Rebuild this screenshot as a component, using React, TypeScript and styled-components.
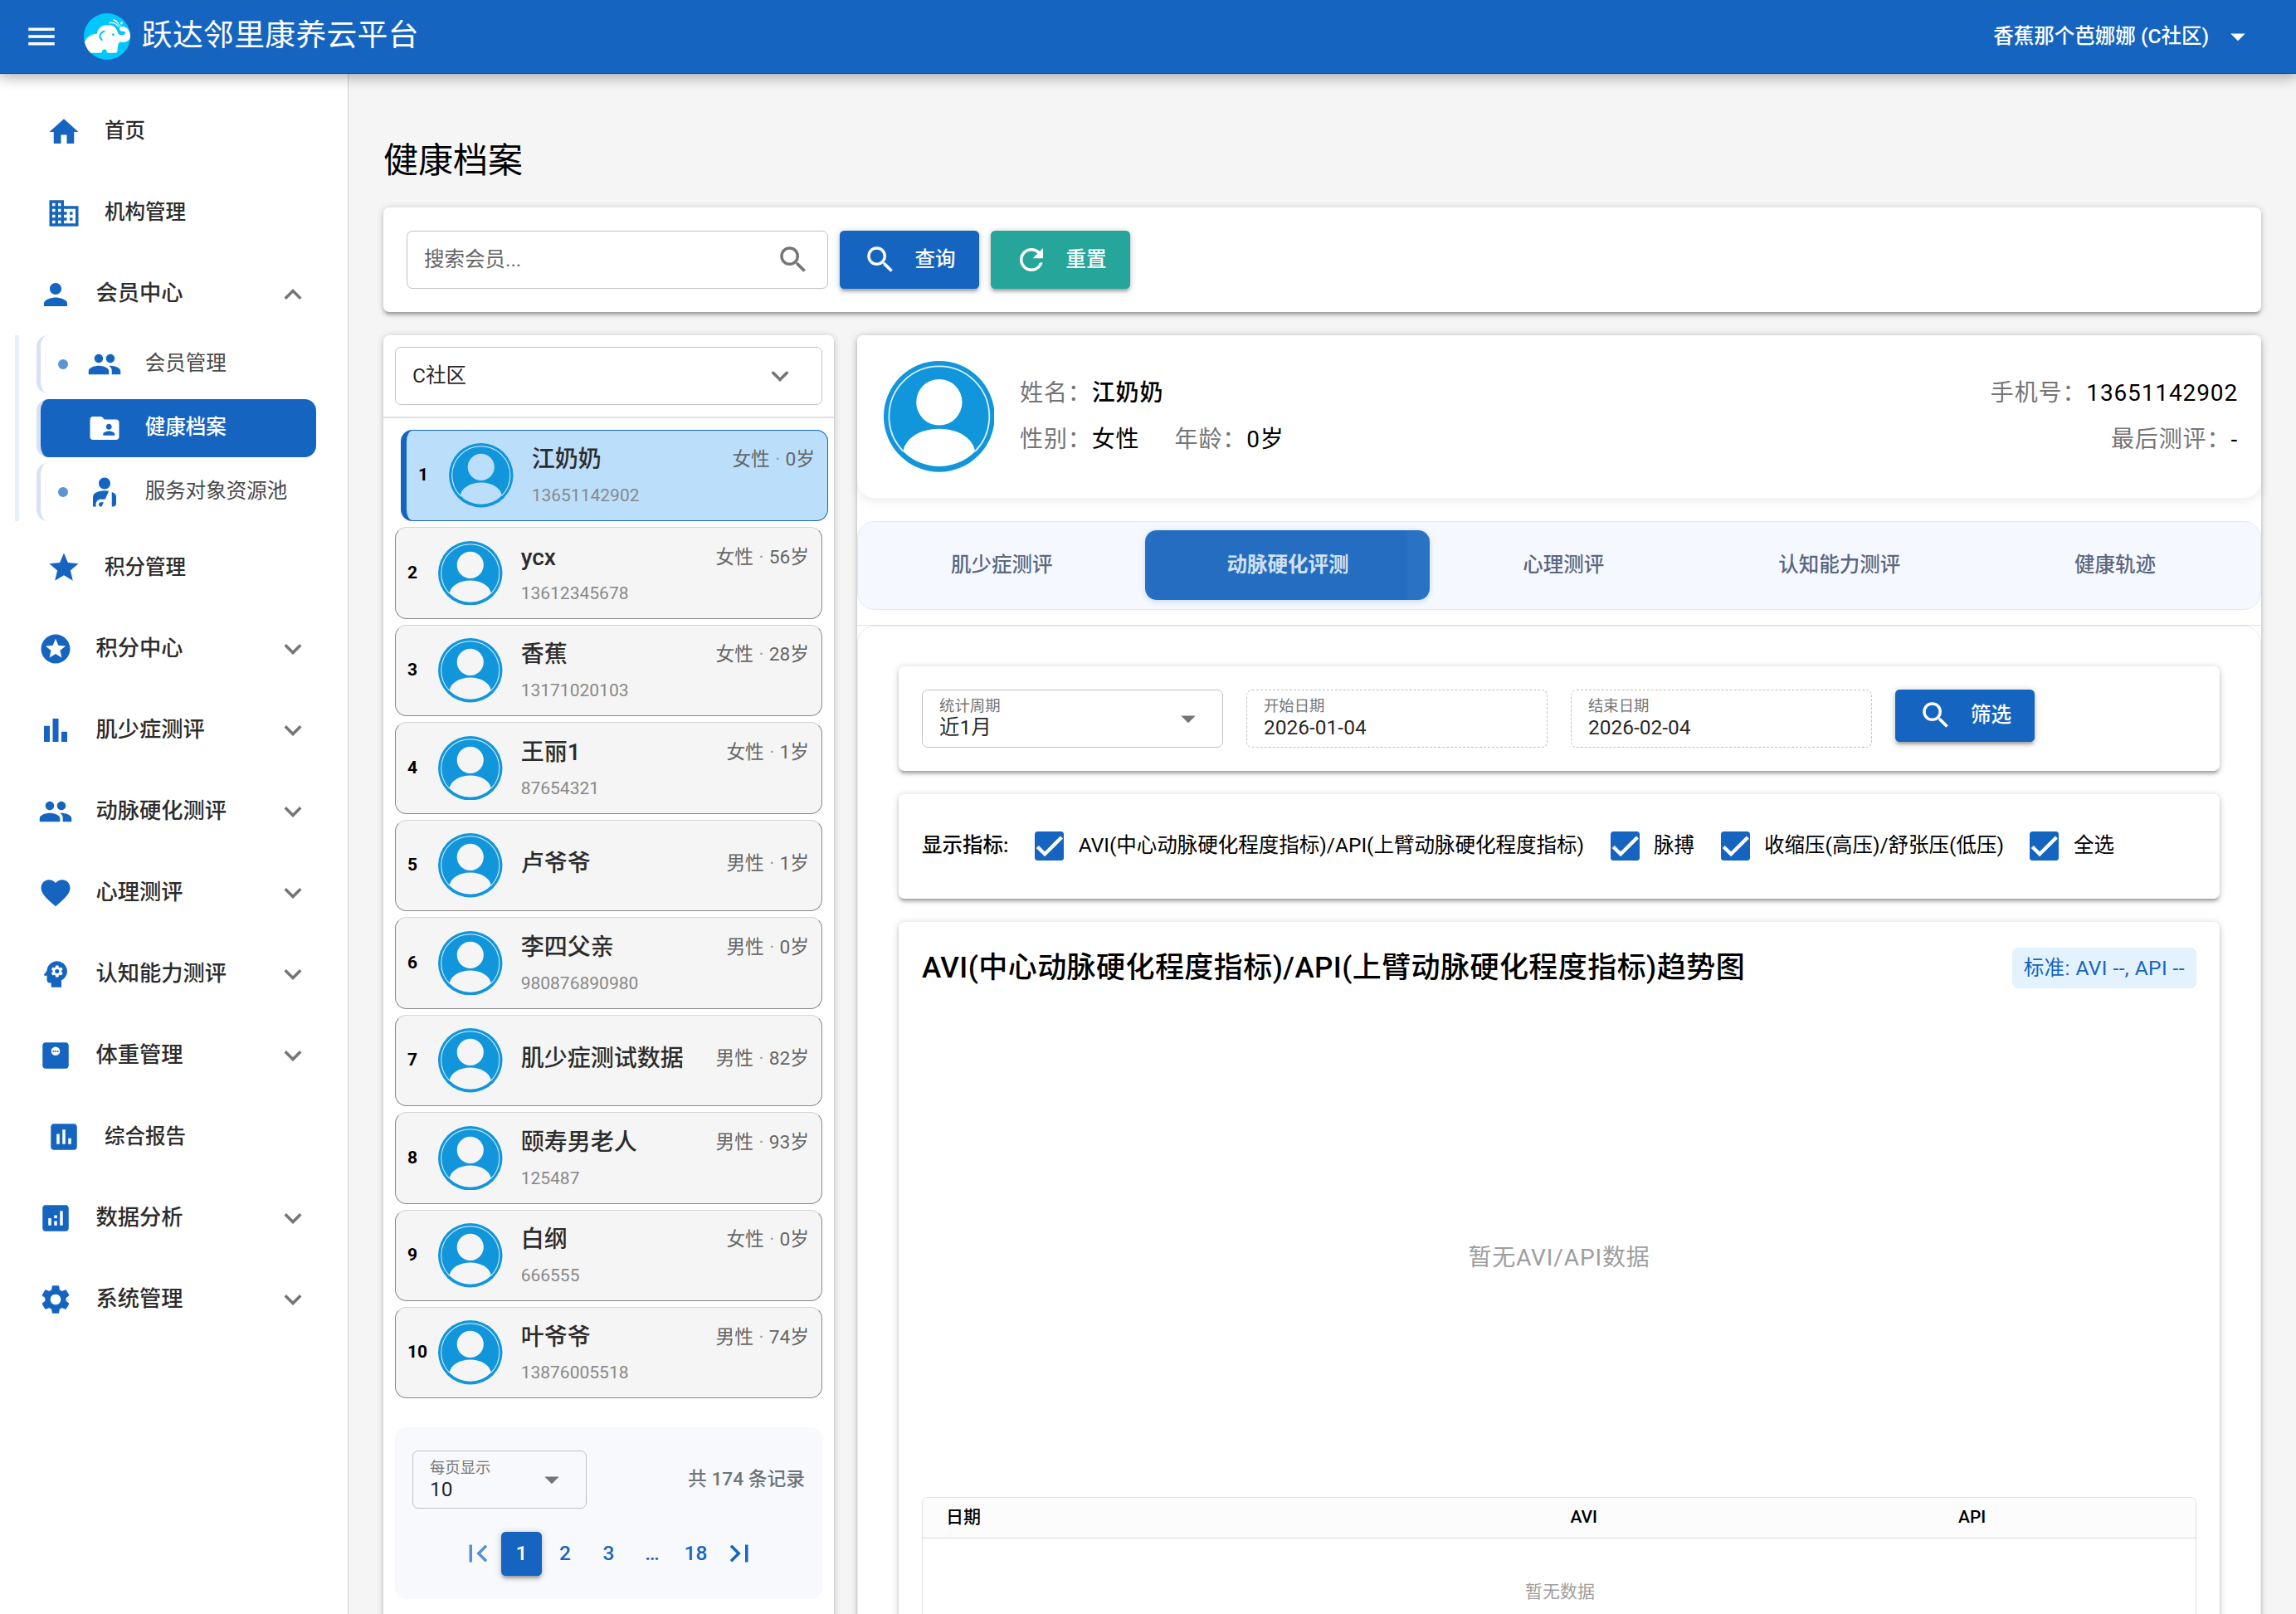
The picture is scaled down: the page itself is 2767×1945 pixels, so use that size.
import React from 'react';
import styled, { createGlobalStyle, css } from 'styled-components';
import type { IconType } from 'react-icons';
import {
  MdAnalytics,
  MdArrowDropDown,
  MdAssessment,
  MdBarChart,
  MdBusiness,
  MdExpandLess,
  MdExpandMore,
  MdFavorite,
  MdFirstPage,
  MdFolderShared,
  MdHome,
  MdLastPage,
  MdMenu,
  MdMonitorWeight,
  MdPeople,
  MdPerson,
  MdPersonalInjury,
  MdPsychology,
  MdRefresh,
  MdSearch,
  MdSettings,
  MdStar,
  MdStars,
} from 'react-icons/md';

const SCALE = 1.75;
const PRIMARY = '#1565c0';
const SECONDARY = '#26a69a';
const SHADOW =
  '0 1px 5px rgba(0,0,0,.2), 0 2px 2px rgba(0,0,0,.14), 0 3px 1px -2px rgba(0,0,0,.12)';

const GlobalStyle = createGlobalStyle`
  *, *::before, *::after { box-sizing: border-box; }
  html, body { margin: 0; overflow: hidden; background: #f5f5f5; }
  body { font-family: Roboto, "Noto Sans CJK SC", "Liberation Sans", sans-serif; }
  svg { display: block; flex: none; }
`;

const Page = styled.div`
  zoom: ${SCALE};
  height: calc(100vh / ${SCALE});
  display: flex;
  flex-direction: column;
  overflow: hidden;
  font-size: 14px;
  line-height: 1.5;
  color: #000;
`;

/* ---------- top bar ---------- */

const TopBar = styled.header`
  flex: none;
  position: relative;
  z-index: 2;
  display: flex;
  align-items: center;
  height: 50.6px;
  padding: 0 12px;
  color: #fff;
  background: ${PRIMARY};
  border-bottom: 1px solid rgba(0, 0, 0, 0.3);
  box-shadow: 0 0 10px 2px rgba(0, 0, 0, 0.2), 0 0 10px rgba(0, 0, 0, 0.24);
`;

const MenuButton = styled.div`
  width: 33.6px;
  display: flex;
  justify-content: center;
`;

const LogoBox = styled.div`
  margin: 0 8px 0 12px;
`;

const AppTitle = styled.div`
  flex: 1;
  font-size: 21px;
  letter-spacing: 0.01em;
  line-height: 1;
`;

const Account = styled.div`
  display: flex;
  align-items: center;
  gap: 8px;
  font-weight: 500;
  padding-right: 16px;
  line-height: 24px;
`;

/* ---------- drawer ---------- */

const Body = styled.div`
  flex: 1;
  min-height: 0;
  display: flex;
`;

const Drawer = styled.nav`
  flex: none;
  width: 240px;
  padding: 16px 12px 0 10px;
  background: #fff;
  border-right: 1px solid rgba(0, 0, 0, 0.18);
`;

const NavItem = styled.div<{ $group?: boolean }>`
  display: flex;
  align-items: center;
  height: 48px;
  margin-bottom: 8px;
  padding: 0 12px 0 ${(p) => (p.$group ? 16 : 22)}px;
  color: #2c2c2c;
  font-size: ${(p) => (p.$group ? 15 : 14)}px;
  font-weight: 500;

  > span {
    flex: 1;
    margin-left: 16px;
    padding-bottom: ${(p) => (p.$group ? 0.6 : 0)}px;
  }
  > svg:first-child { color: ${PRIMARY}; }
  > svg:last-child { color: #757575; margin-right: 2px; }
`;

const SubMenu = styled.div`
  display: flex;
  flex-direction: column;
  gap: 4px;
  margin: -3.7px 0 8px;
  padding-left: 12px;
  border-left: 3px solid #e8effc;
`;

const SubItem = styled.div<{ $active?: boolean }>`
  display: flex;
  align-items: center;
  height: 40px;
  width: 192.9px;
  border-left: 3px solid #d6e2f7;
  border-radius: 8px;
  color: #4a4a4a;
  font-size: 14px;

  > svg { color: ${PRIMARY}; margin-right: 16px; }
  > span { padding-bottom: 0.4px; }
  ${(p) =>
    p.$active &&
    css`
      background: ${PRIMARY};
      color: #fff;
      font-weight: 500;
      > svg { color: #fff; }
    `}
`;

const Dot = styled.i<{ $hidden?: boolean }>`
  width: 7px;
  height: 7px;
  margin: 0 13.1px 0 12px;
  border-radius: 50%;
  background: ${PRIMARY};
  opacity: ${(p) => (p.$hidden ? 0 : 0.7)};
`;

/* ---------- main area ---------- */

const Main = styled.main`
  flex: 1;
  min-width: 0;
  padding: 44.2px 24px 0;
  background: #f5f5f5;
`;

const PageTitle = styled.h5`
  margin: 0 0 16px;
  font-size: 24px;
  line-height: 32px;
  font-weight: 400;
`;

const Card = styled.section`
  background: #fff;
  border-radius: 4px;
  box-shadow: ${SHADOW};
`;

const SearchCard = styled(Card)`
  display: flex;
  gap: 8px;
  padding: 16px;
  margin-bottom: 16px;
`;

const Field = styled.div<{ $dashed?: boolean }>`
  display: flex;
  align-items: center;
  height: 40px;
  padding: 0 11.4px;
  border: 1px ${(p) => (p.$dashed ? 'dashed' : 'solid')} #c2c2c2;
  border-radius: 4px;
  color: rgba(0, 0, 0, 0.87);
  > span {
    flex: 1;
    padding-top: 0.6px;
  }
  > svg { color: #757575; }
`;

const SearchField = styled(Field)`
  width: 290px;
  color: #666;
`;

const CommunityField = styled(Field)`
  margin: 8px;
  > svg { margin-right: 5px; }
`;

const LabeledText = styled.div`
  flex: 1;
  display: flex;
  flex-direction: column;
  padding-bottom: 0.8px;
  > small {
    font-size: 10.5px;
    line-height: 14px;
    color: #757575;
  }
  > b {
    font-weight: 400;
    line-height: 16px;
  }
`;

const Button = styled.div<{ $color?: string; $height?: number }>`
  display: flex;
  align-items: center;
  gap: 12px;
  width: 96px;
  height: ${(p) => p.$height ?? 40}px;
  padding: 0 16px;
  border-radius: 3px;
  color: #fff;
  font-weight: 500;
  background: ${(p) => p.$color ?? PRIMARY};
  box-shadow: ${SHADOW};
`;

const Columns = styled.div`
  display: flex;
  gap: 16px;
  min-height: 940px;
`;

const ListCard = styled(Card)`
  flex: none;
  width: 24%;
`;

const ListDivider = styled.hr`
  height: 1.2px;
  margin: 0;
  border: 0;
  background: #e0e0e0;
`;

const MemberList = styled.div`
  display: flex;
  flex-direction: column;
  gap: 4px;
  padding: 7.8px 8px 20px;
`;

const MemberRow = styled.div<{ $active?: boolean }>`
  display: flex;
  align-items: center;
  height: 63.14px;
  padding: 0 8px;
  border: 1px solid #8c8686;
  border-top-color: #d4d4d4;
  border-radius: 8px;
  background: #f5f5f5;
  ${(p) =>
    p.$active &&
    css`
      border-color: ${PRIMARY};
      border-left-width: 4px;
      background: #bbdefb;
      transform: translateX(4px);
    `}
`;

const RowNumber = styled.div`
  flex: none;
  width: 21.2px;
  font-size: 12px;
  font-weight: 700;
`;

const MemberInfo = styled.div<{ $single?: boolean }>`
  flex: 1;
  min-width: 0;
  margin: 0 0 ${(p) => (p.$single ? 1.6 : 0)}px 12.6px;
`;

const NameLine = styled.div`
  display: flex;
  justify-content: space-between;
  align-items: center;
  height: 24px;
  color: #2c2c2c;
  font-size: 16px;
  font-weight: 500;
  padding-right: 0.6px;
  > span {
    color: #666;
    font-size: 13px;
    font-weight: 400;
  }
  i {
    margin: 0 0.4px;
    color: #999;
    font-style: normal;
  }
`;

const Phone = styled.div`
  margin-top: 1.6px;
  height: 19.6px;
  line-height: 22px;
  color: #888;
  font-size: 12px;
`;

const PagerBox = styled.div`
  margin: 0 8px;
  padding: 16px 12px;
  border-radius: 8px;
  background: #f8f9fc;
`;

const PagerTop = styled.div`
  display: flex;
  align-items: center;
  justify-content: space-between;
  margin-bottom: 16px;
  > ${Field} { width: 120px; }
  > span {
    color: #6c757d;
    font-size: 13px;
    font-weight: 500;
  }
`;

const PagerButtons = styled.div`
  display: flex;
  justify-content: center;
  gap: 2px;
  font-weight: 500;
  color: ${PRIMARY};
`;

const PagerButton = styled.div<{ $active?: boolean; $dim?: boolean }>`
  display: flex;
  align-items: center;
  justify-content: center;
  width: 28px;
  height: 30px;
  padding-bottom: 0.5px;
  border-radius: 3px;
  opacity: ${(p) => (p.$dim ? 0.7 : 1)};
  ${(p) =>
    p.$active &&
    css`
      background: ${PRIMARY};
      color: #fff;
      box-shadow: ${SHADOW};
    `}
`;

/* ---------- detail ---------- */

const DetailCard = styled(Card)`
  flex: 1;
  min-width: 0;
  display: flex;
  flex-direction: column;
`;

const Profile = styled.div`
  display: flex;
  align-items: center;
  height: 112px;
  padding: 0 16px 0 18px;
  margin-bottom: 16px;
  border-radius: 4px 4px 12px 12px;
  background: #fff;
  box-shadow: 0 2px 8px rgba(0, 0, 0, 0.08);
`;

const ProfileColumn = styled.div<{ $right?: boolean }>`
  display: flex;
  flex-direction: column;
  gap: 8px;
  align-items: ${(p) => (p.$right ? 'flex-end' : 'flex-start')};
  margin-left: ${(p) => (p.$right ? 'auto' : '17.6px')};
`;

const ProfileLine = styled.div`
  display: flex;
  gap: 24px;
  font-size: 16px;
  line-height: 24px;
  letter-spacing: 0.5px;
  color: #757575;
`;

const Value = styled.span<{ $strong?: boolean }>`
  color: #000;
  font-weight: ${(p) => (p.$strong ? 500 : 400)};
`;

const TabBar = styled.div`
  display: flex;
  gap: 8px;
  height: 61.14px;
  padding: 6px 16px 6px 8px;
  margin-bottom: 10.2px;
  border: 1px solid #e1e9f7;
  border-radius: 12px;
  background: #f5f9ff;
`;

const Tab = styled.div<{ $active?: boolean }>`
  flex: 1 1 auto;
  display: flex;
  align-items: center;
  justify-content: center;
  border-radius: 8px;
  color: #5b6780;
  font-weight: 500;
  padding-bottom: 0.4px;
  ${(p) =>
    p.$active &&
    css`
      color: #d0e0f2;
      font-weight: 700;
      background: linear-gradient(90deg, #2a70c2 0, #246dc0 3%, #246dc0 91%, #2a72c4 93%);
      box-shadow: 0 1px 4px rgba(21, 101, 192, 0.2);
    `}
`;

const ThinDivider = styled.hr`
  height: 1px;
  margin: 0;
  border: 0;
  background: #e0e0e0;
`;

const Panel = styled.div`
  flex: 1;
  display: flex;
  flex-direction: column;
  gap: 16px;
  padding: 27px 28px;
  border: 1px solid #e3e8f5;
  border-radius: 12px 12px 0 0;
`;

const FilterCard = styled(Card)`
  display: flex;
  gap: 16px;
  padding: 16px;
  > ${Field} { width: 207.4px; }
`;

const MetricCard = styled(Card)`
  display: flex;
  align-items: center;
  gap: 8px;
  height: 72px;
  padding: 0 16px;
  > strong {
    width: 59.8px;
    font-weight: 500;
    white-space: nowrap;
  }
`;

const CheckItem = styled.div`
  display: flex;
  align-items: center;
`;

const CheckBox = styled.div`
  width: 20px;
  height: 20px;
  margin: 0 10px;
  border-radius: 2px;
  background: ${PRIMARY};
`;

const ChartCard = styled(Card)`
  flex: 1;
  padding: 16px;
`;

const ChartHead = styled.div`
  display: flex;
  align-items: center;
  justify-content: space-between;
  height: 32px;
`;

const ChartTitle = styled.h6`
  margin: 0;
  font-size: 20px;
  line-height: 32px;
  font-weight: 500;
  letter-spacing: 0.0125em;
`;

const Standard = styled.div`
  height: 28px;
  padding: 0 8px;
  border-radius: 4px;
  line-height: 28px;
  letter-spacing: 0.01786em;
  color: ${PRIMARY};
  background: #e3f2fd;
`;

const ChartEmpty = styled.div`
  display: flex;
  align-items: center;
  justify-content: center;
  height: 348.4px;
  padding-top: 19px;
  color: #9e9e9e;
  font-size: 16px;
  letter-spacing: 0.5px;
`;

const Table = styled.div`
  height: 200px;
  border: 1px solid #e0e0e0;
  border-radius: 4px;
  overflow: hidden;
`;

const TableHead = styled.div`
  display: grid;
  grid-template-columns: 342fr 227fr 308fr;
  height: 28px;
  line-height: 27px;
  font-size: 12px;
  font-weight: 500;
  text-align: center;
  background: #fcfcfc;
  border-bottom: 1px solid #dadada;
  > :first-child {
    text-align: left;
    padding-left: 16px;
  }
`;

const TableEmpty = styled.div`
  padding: 27.8px 0 0 1px;
  text-align: center;
  font-size: 12px;
  color: #9e9e9e;
`;

/* ---------- drawings ---------- */

const Logo = () => (
  <svg width="32" height="32" viewBox="15 18 168 168">
    <defs>
      <clipPath id="logoClip">
        <circle cx="99" cy="102" r="84" />
      </clipPath>
    </defs>
    <circle cx="99" cy="102" r="84" fill="#00c8ff" />
    <g clipPath="url(#logoClip)">
      <path
        fill="#fff"
        d="M22 160C18 148 13 128 22 114C32 99 46 93 62 92C66 72 82 60 101 60C118 60 131 68 135 80C137 91 144 98 153 97C162 96 167 91 165 85C162 82 153 86 147 80C140 72 148 64 160 67C174 70 184 86 184 100C183 116 169 124 152 122C144 120 140 126 138 136L136 156C135 160 133 161 130 161L102 161C98 161 98 158 98 154C96 147 84 147 81 154C81 159 80 161 76 161L28 161Z"
      />
      <path
        fill="none"
        stroke="#00c8ff"
        strokeWidth="6"
        strokeLinecap="round"
        d="M89 83C72 88 68 104 80 114"
      />
      <circle cx="121" cy="95" r="4.2" fill="#00c8ff" />
      <g fill="none" stroke="#fff" strokeLinecap="round">
        <path strokeWidth="4" d="M108 53C122 50 132 56 140 65" />
        <path strokeWidth="5" d="M123 42C129 43 134 47 137 52" />
        <path strokeWidth="3" d="M136 51L147 64" />
        <path strokeWidth="7" d="M152 52L151 55" />
      </g>
      <circle cx="147" cy="70" r="2.6" fill="#fff" />
    </g>
  </svg>
);

const Avatar = ({ size }: { size: number }) => (
  <svg width={size} height={size} viewBox="0 0 100 100">
    <path
      fill="#1296db"
      fillRule="evenodd"
      d="M50 0A50 50 0 1 1 50 100A50 50 0 1 1 50 0ZM50 16.4A20.7 20.8 0 1 0 50 58A20.7 20.8 0 1 0 50 16.4ZM17.6 81.5A45.5 45.5 0 0 0 82.4 81.5C80.5 69.5 67 61.2 50 61.2C33 61.2 19.5 69.5 17.6 81.5Z"
    />
    <path
      fill="none"
      stroke="#fff"
      strokeOpacity=".85"
      strokeWidth="1.3"
      d="M17.6 81.5A45.2 45.2 0 1 1 82.4 81.5"
    />
  </svg>
);

const Tick = () => (
  <svg width="20" height="20" viewBox="0 0 24 24">
    <path
      fill="none"
      stroke="#fff"
      strokeWidth="3.12"
      d="M1.73 12.91 8.1 19.28 22.79 4.59"
      transform="translate(0.6 0.4) scale(.95)"
    />
  </svg>
);

/* ---------- data ---------- */

type Entry = { icon: IconType; label: string; group?: boolean; open?: boolean };

const nav: Entry[] = [
  { icon: MdHome, label: '首页' },
  { icon: MdBusiness, label: '机构管理' },
  { icon: MdPerson, label: '会员中心', group: true, open: true },
  { icon: MdStar, label: '积分管理' },
  { icon: MdStars, label: '积分中心', group: true },
  { icon: MdBarChart, label: '肌少症测评', group: true },
  { icon: MdPeople, label: '动脉硬化测评', group: true },
  { icon: MdFavorite, label: '心理测评', group: true },
  { icon: MdPsychology, label: '认知能力测评', group: true },
  { icon: MdMonitorWeight, label: '体重管理', group: true },
  { icon: MdAssessment, label: '综合报告' },
  { icon: MdAnalytics, label: '数据分析', group: true },
  { icon: MdSettings, label: '系统管理', group: true },
];

const subNav = [
  { icon: MdPeople, label: '会员管理' },
  { icon: MdFolderShared, label: '健康档案', active: true },
  { icon: MdPersonalInjury, label: '服务对象资源池' },
];

const members = [
  { name: '江奶奶', sex: '女性', age: 0, phone: '13651142902' },
  { name: 'ycx', sex: '女性', age: 56, phone: '13612345678' },
  { name: '香蕉', sex: '女性', age: 28, phone: '13171020103' },
  { name: '王丽1', sex: '女性', age: 1, phone: '87654321' },
  { name: '卢爷爷', sex: '男性', age: 1 },
  { name: '李四父亲', sex: '男性', age: 0, phone: '980876890980' },
  { name: '肌少症测试数据', sex: '男性', age: 82 },
  { name: '颐寿男老人', sex: '男性', age: 93, phone: '125487' },
  { name: '白纲', sex: '女性', age: 0, phone: '666555' },
  { name: '叶爷爷', sex: '男性', age: 74, phone: '13876005518' },
];

const tabs = ['肌少症测评', '动脉硬化评测', '心理测评', '认知能力测评', '健康轨迹'];

const metrics = [
  'AVI(中心动脉硬化程度指标)/API(上臂动脉硬化程度指标)',
  '脉搏',
  '收缩压(高压)/舒张压(低压)',
  '全选',
];

/* ---------- views ---------- */

const Sidebar = () => (
  <Drawer>
    {nav.map(({ icon: Icon, label, group, open }) => (
      <React.Fragment key={label}>
        <NavItem $group={group}>
          <Icon size={24} />
          <span>{label}</span>
          {group && (open ? <MdExpandLess size={24} /> : <MdExpandMore size={24} />)}
        </NavItem>
        {open && (
          <SubMenu>
            {subNav.map(({ icon: SubIcon, label: text, active }) => (
              <SubItem key={text} $active={active}>
                <Dot $hidden={active} />
                <SubIcon size={24} />
                <span>{text}</span>
              </SubItem>
            ))}
          </SubMenu>
        )}
      </React.Fragment>
    ))}
  </Drawer>
);

const Members = () => (
  <ListCard>
    <CommunityField>
      <span>C社区</span>
      <MdExpandMore size={24} />
    </CommunityField>
    <ListDivider />
    <MemberList>
      {members.map((m, i) => (
        <MemberRow key={m.name} $active={i === 0}>
          <RowNumber>{i + 1}</RowNumber>
          <Avatar size={44.3} />
          <MemberInfo $single={!m.phone}>
            <NameLine>
              {m.name}
              <span>
                {m.sex} <i>·</i> {m.age}岁
              </span>
            </NameLine>
            {m.phone && <Phone>{m.phone}</Phone>}
          </MemberInfo>
        </MemberRow>
      ))}
    </MemberList>
    <PagerBox>
      <PagerTop>
        <Field>
          <LabeledText>
            <small>每页显示</small>
            <b>10</b>
          </LabeledText>
          <MdArrowDropDown size={24} />
        </Field>
        <span>共 174 条记录</span>
      </PagerTop>
      <PagerButtons>
        <PagerButton $dim>
          <MdFirstPage size={24} />
        </PagerButton>
        <PagerButton $active>1</PagerButton>
        <PagerButton>2</PagerButton>
        <PagerButton>3</PagerButton>
        <PagerButton>…</PagerButton>
        <PagerButton>18</PagerButton>
        <PagerButton>
          <MdLastPage size={24} />
        </PagerButton>
      </PagerButtons>
    </PagerBox>
  </ListCard>
);

const Detail = () => (
  <DetailCard>
    <Profile>
      <Avatar size={76.4} />
      <ProfileColumn>
        <ProfileLine>
          <span>
            姓名：<Value $strong>江奶奶</Value>
          </span>
        </ProfileLine>
        <ProfileLine>
          <span>
            性别：<Value>女性</Value>
          </span>
          <span>
            年龄：<Value>0岁</Value>
          </span>
        </ProfileLine>
      </ProfileColumn>
      <ProfileColumn $right>
        <ProfileLine>
          <span>
            手机号：<Value>13651142902</Value>
          </span>
        </ProfileLine>
        <ProfileLine>
          <span>
            最后测评：<Value>-</Value>
          </span>
        </ProfileLine>
      </ProfileColumn>
    </Profile>
    <TabBar>
      {tabs.map((t, i) => (
        <Tab key={t} $active={i === 1}>
          {t}
        </Tab>
      ))}
    </TabBar>
    <ThinDivider />
    <Panel>
      <FilterCard>
        <Field>
          <LabeledText>
            <small>统计周期</small>
            <b>近1月</b>
          </LabeledText>
          <MdArrowDropDown size={24} />
        </Field>
        <Field $dashed>
          <LabeledText>
            <small>开始日期</small>
            <b>2026-01-04</b>
          </LabeledText>
        </Field>
        <Field $dashed>
          <LabeledText>
            <small>结束日期</small>
            <b>2026-02-04</b>
          </LabeledText>
        </Field>
        <Button $height={36}>
          <MdSearch size={24} />
          <span>筛选</span>
        </Button>
      </FilterCard>
      <MetricCard>
        <strong>显示指标:</strong>
        {metrics.map((m) => (
          <CheckItem key={m}>
            <CheckBox>
              <Tick />
            </CheckBox>
            <span>{m}</span>
          </CheckItem>
        ))}
      </MetricCard>
      <ChartCard>
        <ChartHead>
          <ChartTitle>AVI(中心动脉硬化程度指标)/API(上臂动脉硬化程度指标)趋势图</ChartTitle>
          <Standard>标准: AVI --, API --</Standard>
        </ChartHead>
        <ChartEmpty>暂无AVI/API数据</ChartEmpty>
        <Table>
          <TableHead>
            <div>日期</div>
            <div>AVI</div>
            <div>API</div>
          </TableHead>
          <TableEmpty>暂无数据</TableEmpty>
        </Table>
      </ChartCard>
    </Panel>
  </DetailCard>
);

export default function App() {
  return (
    <>
      <GlobalStyle />
      <Page>
        <TopBar>
          <MenuButton>
            <MdMenu size={24} />
          </MenuButton>
          <LogoBox>
            <Logo />
          </LogoBox>
          <AppTitle>跃达邻里康养云平台</AppTitle>
          <Account>
            香蕉那个芭娜娜 (C社区)
            <MdArrowDropDown size={24} />
          </Account>
        </TopBar>
        <Body>
          <Sidebar />
          <Main>
            <PageTitle>健康档案</PageTitle>
            <SearchCard>
              <SearchField>
                <span>搜索会员...</span>
                <MdSearch size={24} />
              </SearchField>
              <Button>
                <MdSearch size={24} />
                <span>查询</span>
              </Button>
              <Button $color={SECONDARY}>
                <MdRefresh size={24} />
                <span>重置</span>
              </Button>
            </SearchCard>
            <Columns>
              <Members />
              <Detail />
            </Columns>
          </Main>
        </Body>
      </Page>
    </>
  );
}
